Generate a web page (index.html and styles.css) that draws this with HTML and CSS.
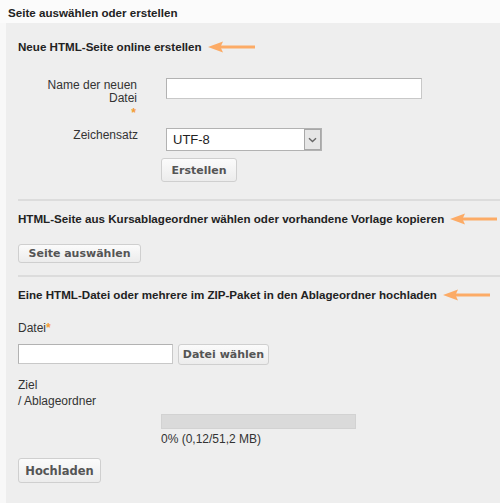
FILE: index.html
```html
<!DOCTYPE html>
<html lang="de">
<head>
<meta charset="utf-8">
<title>Seite auswählen oder erstellen</title>
<link rel="stylesheet" href="styles.css">
</head>
<body>
<div class="page-title">Seite auswählen oder erstellen</div>
<div class="panel">
  <section class="sec sec-new">
    <h3 class="sec-head">Neue HTML-Seite online erstellen<svg class="arrow" width="47" height="12" viewBox="0 0 47 12"><path d="M11 6H47" stroke="#fcab66" stroke-width="3"/><path d="M0 6L15 0.5L12.5 6L15 11.5Z" fill="#fcab66"/></svg></h3>
    <div class="form-grid">
      <label class="lbl lbl-name">Name der neuen Datei<span class="req">*</span></label>
      <div class="field"><div class="input input-name"></div></div>
      <label class="lbl lbl-charset">Zeichensatz</label>
      <div class="field">
        <div class="select"><span class="select-val">UTF-8</span><span class="select-arrow"><svg width="9" height="6" viewBox="0 0 9 6"><path d="M1 1.2L4.5 4.5L8 1.2" fill="none" stroke="#666" stroke-width="1.4"/></svg></span></div>
      </div>
      <div></div>
      <div class="field"><button class="btn btn-create">Erstellen</button></div>
    </div>
  </section>
  <hr class="sep">
  <section class="sec sec-choose">
    <h3 class="sec-head">HTML-Seite aus Kursablageordner wählen oder vorhandene Vorlage kopieren<svg class="arrow" width="47" height="12" viewBox="0 0 47 12"><path d="M11 6H47" stroke="#fcab66" stroke-width="3"/><path d="M0 6L15 0.5L12.5 6L15 11.5Z" fill="#fcab66"/></svg></h3>
    <button class="btn btn-choose">Seite auswählen</button>
  </section>
  <hr class="sep">
  <section class="sec sec-upload">
    <h3 class="sec-head">Eine HTML-Datei oder mehrere im ZIP-Paket in den Ablageordner hochladen<svg class="arrow" width="47" height="12" viewBox="0 0 47 12"><path d="M11 6H47" stroke="#fcab66" stroke-width="3"/><path d="M0 6L15 0.5L12.5 6L15 11.5Z" fill="#fcab66"/></svg></h3>
    <div class="file-label">Datei<span class="req">*</span></div>
    <div class="file-row"><div class="input input-file"></div><button class="btn btn-file">Datei wählen</button></div>
    <div class="target">Ziel<br>/ Ablageordner</div>
    <div class="quota">
      <div class="bar"></div>
      <div class="quota-text">0% (0,12/51,2 MB)</div>
    </div>
    <button class="btn btn-upload">Hochladen</button>
  </section>
</div>
</body>
</html>
```
FILE: styles.css
```css
html, body {
  margin: 0;
  padding: 0;
}
body {
  background: #f8f8f8;
  font-family: "Liberation Sans", Arial, sans-serif;
  font-size: 12px;
  color: #333;
  width: 500px;
  height: 503px;
  overflow: hidden;
}
.page-title {
  font-weight: bold;
  font-size: 11.6px;
  color: #222;
  height: 23px;
  box-sizing: border-box;
  padding: 6px 0 0 8px;
  line-height: 14px;
  background: #fbfbfb;
}
.panel {
  margin-left: 6px;
  background: #eeeeee;
  min-height: 480px;
  padding-left: 12px;
  box-sizing: border-box;
}
.sec-head {
  margin: 0;
  font-size: 11.6px;
  font-weight: bold;
  color: #222;
  line-height: 14px;
  display: flex;
  align-items: center;
}
.arrow {
  margin-left: 6px;
  flex: none;
}
.sec-new {
  padding-top: 17px;
  padding-bottom: 17px;
}
.form-grid {
  display: grid;
  grid-template-columns: 120px 1fr;
  column-gap: 28px;
  margin-top: 24px;
}
.lbl {
  text-align: right;
  line-height: 13px;
  padding-top: 1px;
}
.lbl-name {
  padding-right: 1px;
}
.lbl .req {
  display: block;
  margin-top: 2px;
  margin-right: 1px;
}
.req {
  color: #f39c35;
  font-weight: bold;
}
.lbl-charset {
  padding-top: 1px;
  margin-top: 8px;
}
.input {
  background: #fff;
  border: 1px solid #b2b2b2;
  border-bottom-color: #c8c8c8;
  border-right-color: #c8c8c8;
  box-sizing: border-box;
}
.input-name {
  width: 256px;
  height: 21px;
}
.select {
  margin-top: 8px;
  width: 156px;
  height: 23px;
  box-sizing: border-box;
  background: #fff;
  border: 1px solid #b2b2b2;
  display: flex;
  align-items: stretch;
}
.select-val {
  flex: 1;
  padding-left: 6px;
  line-height: 21px;
  font-size: 13px;
  color: #222;
}
.select-arrow {
  width: 15px;
  background: #e6e6e6;
  border: 1px solid #a8a8a8;
  display: flex;
  align-items: center;
  justify-content: center;
}
.btn {
  font-family: "DejaVu Sans", Verdana, sans-serif;
  font-weight: bold;
  font-size: 11px;
  color: #555;
  background: linear-gradient(#fbfbfb, #ececec);
  border: 1px solid #cfcfcf;
  border-radius: 3px;
  padding: 0;
  margin: 0;
  box-sizing: border-box;
  display: block;
}
.btn-create {
  margin-top: 7px;
  margin-left: -5px;
  width: 76px;
  height: 24px;
}
.sep {
  margin: 0;
  border: 0;
  height: 2px;
  background: #dcdcdc;
}
.sec-choose {
  padding-top: 11px;
  padding-bottom: 12px;
}
.btn-choose {
  margin-top: 18px;
  width: 123px;
  height: 19px;
}
.sec-upload {
  padding-top: 11px;
}
.file-label {
  margin-top: 19px;
  line-height: 14px;
}
.file-row {
  display: flex;
  gap: 5px;
  margin-top: 9px;
}
.input-file {
  width: 155px;
  height: 20px;
}
.btn-file {
  width: 91px;
  height: 21px;
}
.target {
  margin-top: 12px;
  line-height: 16px;
}
.quota {
  margin-left: 143px;
  margin-top: 5px;
}
.bar {
  width: 195px;
  height: 15px;
  background: #dadada;
  border: 1px solid #d2d2d2;
  box-sizing: border-box;
}
.quota-text {
  margin-top: 3px;
  line-height: 14px;
}
.btn-upload {
  margin-top: 12px;
  width: 83px;
  height: 25px;
  font-size: 11.5px;
}
```
